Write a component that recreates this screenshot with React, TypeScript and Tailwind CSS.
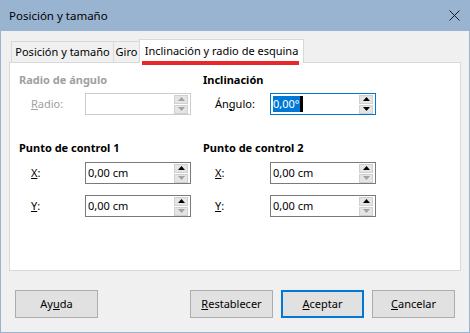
import { ReactNode } from 'react'

const FONT = "font-['Noto_Sans','Liberation_Sans',sans-serif]"

function Arrow({ up, on }: { up: boolean; on: boolean }) {
  return (
    <svg width="7" height="4" viewBox="0 0 7 4">
      <path d={up ? 'M0 4 L3.5 0 L7 4Z' : 'M0 0 L3.5 4 L7 0Z'} fill={on ? '#000000' : '#a3a3a3'} />
    </svg>
  )
}

function Spin({ upOn, downOn }: { upOn: boolean; downOn: boolean }) {
  return (
    <div className="flex flex-col gap-px mr-[2px]">
      <div className="w-[14px] h-[9px] bg-[#e5e5e5] border border-[#d0d0d0] flex items-center justify-center">
        <Arrow up on={upOn} />
      </div>
      <div className="w-[14px] h-[9px] bg-[#e5e5e5] border border-[#d0d0d0] flex items-center justify-center">
        <Arrow up={false} on={downOn} />
      </div>
    </div>
  )
}

function Field({ value, disabled, focused }: { value?: string; disabled?: boolean; focused?: boolean }) {
  const border = focused ? 'border-[#0078d7]' : disabled ? 'border-[#cccccc]' : 'border-[#7a7a7a]'
  return (
    <div className={`w-[106px] h-[22px] shrink-0 border ${border} bg-white flex items-center justify-between`}>
      <div className="pl-[2px] flex items-center h-full whitespace-nowrap">
        {focused ? (
          <>
            <span className="bg-[#0078d7] text-white leading-[16px] h-[16px]">{value}</span>
            <span className="w-[3px] h-[16px] bg-black" />
          </>
        ) : (
          <span>{value}</span>
        )}
      </div>
      <Spin upOn={!disabled} downOn={!disabled && !!focused} />
    </div>
  )
}

function Row({ label, children, disabled, lw }: { label: ReactNode; children: ReactNode; disabled?: boolean; lw: 'l' | 'r' }) {
  return (
    <div className="flex items-center h-[22px]">
      <div
        className={`${lw === 'l' ? 'w-[66px]' : 'w-[67px]'} pl-[12px] shrink-0 whitespace-nowrap ${
          disabled ? 'text-[#a0a0a0]' : 'text-black'
        }`}
      >
        {label}
      </div>
      {children}
    </div>
  )
}

function Heading({ children, disabled }: { children: ReactNode; disabled?: boolean }) {
  return (
    <div className={`font-bold h-[16px] leading-[16px] whitespace-nowrap ${disabled ? 'text-[#a0a0a0]' : 'text-black'}`}>
      {children}
    </div>
  )
}

function Btn({ children, primary }: { children: ReactNode; primary?: boolean }) {
  return (
    <button
      className={`w-[83px] h-[28px] bg-[#e1e1e1] flex items-center justify-center ${
        primary ? 'border-2 border-[#0078d7]' : 'border border-[#adadad]'
      }`}
    >
      {children}
    </button>
  )
}

export default function App() {
  return (
    <div className={`w-[470px] h-[333px] flex flex-col text-[11px] text-black ${FONT}`}>
      {/* title bar */}
      <div className="h-[31px] bg-[#99b4d1] flex items-center justify-between pl-[9px] pr-[10px] shrink-0">
        <span className="text-[11.5px]">Posición y tamaño</span>
        <svg width="11" height="11" viewBox="0 0 11 11">
          <path d="M0.5 0.5 L10.5 10.5 M10.5 0.5 L0.5 10.5" stroke="#1a1a1a" strokeWidth="1" />
        </svg>
      </div>

      <div className="flex-1 bg-[#f0f0f0] border-x border-b border-[#99b4d1] flex flex-col px-[8px] pt-[8px]">
        {/* tabs */}
        <div className="flex items-end h-[23px] pl-[2px] relative z-10 whitespace-nowrap">
          <div className="w-[102px] h-[21px] border-t border-l border-[#d9d9d9] bg-[#f0f0f0] flex items-center justify-center pt-px">
            Posición y tamaño
          </div>
          <div className="w-[26px] h-[21px] border-t border-l border-[#d9d9d9] bg-[#f0f0f0] flex items-center justify-center pt-px">
            Giro
          </div>
          <div className="relative w-[165px] h-[24px] -mb-px border-t border-x border-[#d9d9d9] bg-white flex items-center justify-center">
            Inclinación y radio de esquina
            <div className="absolute left-[2px] right-[4px] top-[21px] h-[4px] bg-[#e8262b]" />
          </div>
        </div>

        {/* panel */}
        <div className="h-[209px] border border-[#d9d9d9] bg-white pl-[9px] pt-[9px] shrink-0">
          <div className="grid grid-cols-[184px_184px]">
            <div className="flex flex-col">
              <Heading disabled>Radio de ángulo</Heading>
              <div className="mt-[5px]">
                <Row lw="l" label={<><span className="underline">R</span>adio:</>} disabled>
                  <Field disabled />
                </Row>
              </div>
            </div>
            <div className="flex flex-col">
              <Heading>Inclinación</Heading>
              <div className="mt-[5px]">
                <Row lw="r" label={<>Án<span className="underline">g</span>ulo:</>}>
                  <Field value="0,00°" focused />
                </Row>
              </div>
            </div>
          </div>

          <div className="grid grid-cols-[184px_184px] mt-[25px]">
            {[1, 2].map(n => (
              <div key={n} className="flex flex-col">
                <Heading>Punto de control {n}</Heading>
                <div className="mt-[6px] flex flex-col gap-[11px]">
                  <Row lw={n === 1 ? 'l' : 'r'} label={<><span className="underline">X</span>:</>}>
                    <Field value="0,00 cm" />
                  </Row>
                  <Row lw={n === 1 ? 'l' : 'r'} label={<><span className="underline">Y</span>:</>}>
                    <Field value="0,00 cm" />
                  </Row>
                </div>
              </div>
            ))}
          </div>
        </div>

        {/* buttons */}
        <div className="flex items-center mt-[19px] px-[6px]">
          <Btn>Ay<span className="underline">u</span>da</Btn>
          <div className="flex-1" />
          <div className="flex gap-[8px]">
            <Btn><span className="underline">R</span>establecer</Btn>
            <Btn primary><span className="underline">A</span>ceptar</Btn>
            <Btn><span className="underline">C</span>ancelar</Btn>
          </div>
        </div>
      </div>
    </div>
  )
}
